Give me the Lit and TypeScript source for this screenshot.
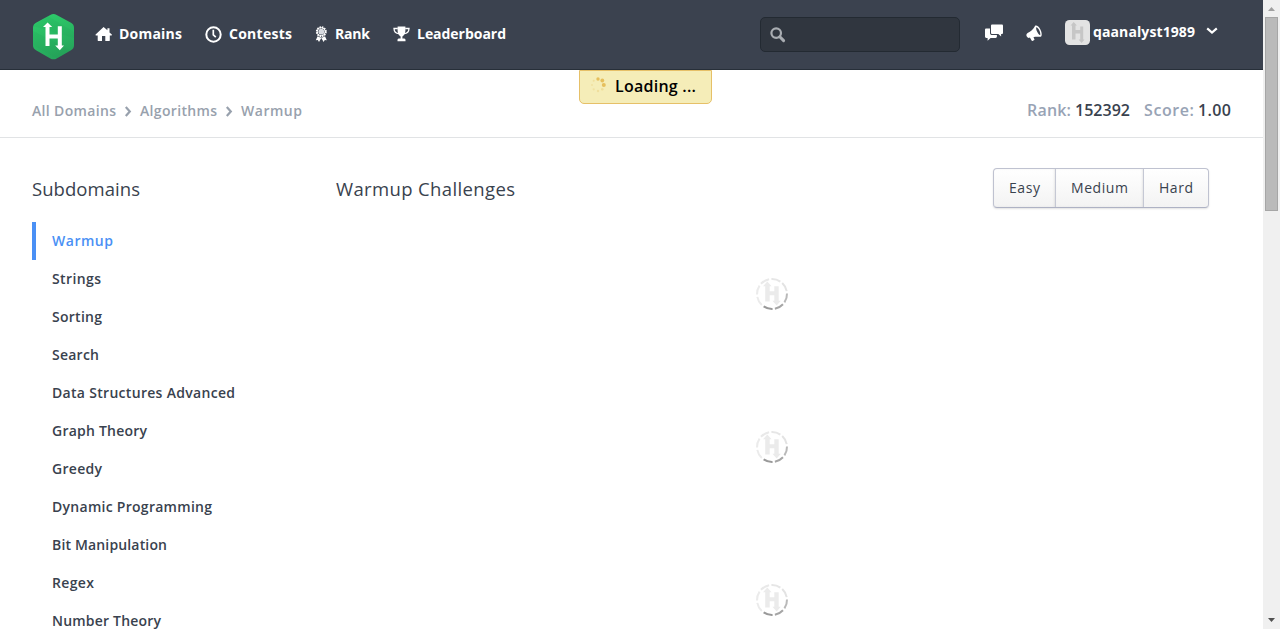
import { LitElement, html, css, svg } from "lit";
import { customElement, property } from "lit/decorators.js";

/** One line of text tracked so that it fills a given width. */
@customElement("fit-text")
class FitText extends LitElement {
  @property({ type: Number }) width = 0;
  @property() text = "";
  static styles = css`
    :host { display: inline-block; white-space: nowrap; flex: none; }
  `;
  render() {
    return html`<span>${this.text}</span>`;
  }
  updated() {
    const span = this.renderRoot.querySelector("span") as HTMLElement;
    span.style.letterSpacing = "0px";
    const natural = span.getBoundingClientRect().width;
    span.style.letterSpacing = `${(this.width - natural) / Math.max(1, this.text.length - 1)}px`;
    this.style.width = `${this.width}px`;
  }
}

const t = (text: string, width: number, cls = "") =>
  html`<fit-text class=${cls} .text=${text} .width=${width}></fit-text>`;

const icons = {
  home: html`<svg width="17" height="16" viewBox="0 0 17 16" fill="#fff"><path d="M8.6 1 .6 8.6c-.3.4-.1.8.4.8h1.700v5.200c0 .3.2.5.5.5H7v-5h3.300v5h4c.3 0 .5-.2.5-.5V9.400h1.600c.5 0 .7-.4.4-.8l-2.300-2.200V2.300h-2.100v2z"/></svg>`,
  clock: html`<svg width="17" height="17" viewBox="0 0 17 17" fill="none" stroke="#fff" stroke-width="2"><circle cx="8.500" cy="8.500" r="7.200"/><path d="M8.300 3.800v5l2.500 2.400" stroke-width="1.700"/></svg>`,
  ribbon: html`<svg width="13" height="17" viewBox="0 0 13 17"><circle cx="6.300" cy="5.700" r="4.500" fill="none" stroke="#fff" stroke-width="1.900" stroke-dasharray="1.500 .86"/><circle cx="6.300" cy="5.700" r="4" fill="none" stroke="#fff" stroke-width="1"/><circle cx="6.300" cy="5.700" r="2.900" fill="#d8dbe0"/><path fill="#fff" d="M2.600 10.300.8 14.300l2-.2 1.200 1.800 2.300-4 2.300 4 1.200-1.800 2 .2-1.800-4-2.500 1.200H5.100z"/></svg>`,
  trophy: html`<svg width="17" height="16" viewBox="0 0 17 16" fill="#fff"><path d="M4.600.4h7.800v4.200c0 3-1.300 5-3 5.900v1.900h1.400c.9 0 1.700.6 1.700 1.400v1.500H4.500v-1.500c0-.8.8-1.400 1.700-1.400h1.400v-1.900c-1.700-.9-3-2.900-3-5.900z"/><path fill="none" stroke="#fff" stroke-width="1.300" d="M4.800 2.500H1c.1 3 1.800 5 5 5.200M12.200 2.500H16c-.1 3-1.800 5-5 5.200"/></svg>`,
  search: html`<svg width="16" height="16" viewBox="0 0 16 16" fill="none" stroke="#a9adb2"><circle cx="6.200" cy="6.100" r="4.800" stroke-width="2.200"/><path d="m9.800 9.800 3.800 3.800" stroke-width="3" stroke-linecap="round"/></svg>`,
  chat: html`<svg width="18" height="17" viewBox="0 0 18 17" fill="#fff"><path d="M7.300.5h9.400c.8 0 1.300.5 1.300 1.300v6.900c0 .8-.5 1.300-1.300 1.300h-.6v2.600l-2.800-2.600h-6C6.500 10 6 9.500 6 8.700V1.800C6 1 6.500.5 7.300.5z"/><path d="M5 4.400H1.300C.5 4.400 0 4.900 0 5.700v6.900c0 .8.500 1.300 1.300 1.300h1.300v2.800l3-2.800h5c.8 0 1.300-.5 1.300-1.300V11H7.200C5.900 11 5 10.200 5 8.900z"/></svg>`,
  horn: html`<svg width="17" height="17" viewBox="0 0 17 17" fill="#fff"><path fill-rule="evenodd" d="M9.300.5c1.500-.5 3.800 1 5.100 3.900 1.500 3.100 1.900 6.500.3 7.400-1.900.1-4.500-.4-6.700.2l-.5.3.9 1.900c.2.400.1.700-.2.900l-1.700.8c-.4.2-.7 0-.9-.300L3.900 12.600c-1.200.6-2.400.2-3.100-1C0 10.300.4 8.800 1.600 8.100 4.800 6.500 7.100 4.700 9.300.5zm1 1.700c-.5 1.200.2 3.100.9 4.600.8 1.600 1.800 3.100 3 3.400.4-1.200-.1-3.200-1-5-.8-1.600-1.900-2.900-2.900-3z"/></svg>`,
  down: html`<svg width="12" height="8" viewBox="0 0 12 8" fill="none" stroke="#fff" stroke-width="2.200"><path d="m1.200 1.300 4.800 4.200 4.800-4.200"/></svg>`,
  crumb: html`<svg width="8" height="11" viewBox="0 0 8 11" fill="none" stroke="#98a1ad" stroke-width="2.200"><path d="m1.800 1 4 4.500L1.800 10"/></svg>`,
  logo: html`<svg width="42" height="46" viewBox="0 0 42 46">
    <defs><linearGradient id="g" x1="0" y1="0" x2=".35" y2="1"><stop offset="0" stop-color="#2ed06c"/><stop offset="1" stop-color="#26a65b"/></linearGradient></defs>
    <path fill="url(#g)" d="M17.300 1Q20.500-.8 23.700 1L38 8.800q3 1.700 3 5v17.500q0 3.300-3 5L23.700 44.400Q20.500 46.200 17.300 44.400L3 36.300Q0 34.600 0 31.300V13.800Q0 10.500 3 8.800z"/>
    <path fill="#1f9150" opacity=".12" d="M0 17 41 38l-3-1.700L23.700 44.400 0 31zM0 12 15 2.300 41 18v6z"/>
    <path fill="#fff" d="M14.600 8.500 19.200 13H16.500v7.400h8.300V12.300h4V31.500H31L26.800 36.200 22.200 31.500h2.600V24.400H16.500V32h-4V13H10z"/></svg>`,
  avatar: html`<svg width="25" height="25" viewBox="0 0 25 25"><rect width="25" height="25" rx="4.500" fill="#e3e3e3"/><path fill="#c6c6c6" d="m8.700 2 3.200 3.500H10.500v4.500h4.700V6.500h3V19.500h1.300l-2.900 3.600-3-3.600h1.600v-6H10.500V19.500H7V5.500H5.600z"/></svg>`,
  wait: html`<svg width="16" height="16" viewBox="0 0 16 16" fill="#e6bf5c"><circle cx="8" cy="2" r="1.700"/><circle cx="12.300" cy="3.500" r="1.900"/><circle cx="13.800" cy="8" r="2"/><circle cx="12.300" cy="12.200" r="1.300" opacity=".35"/><circle cx="8" cy="14" r="1.200" opacity=".3"/><circle cx="3.700" cy="12.300" r="1.100" opacity=".25"/><circle cx="2" cy="8" r="1" opacity=".25"/><circle cx="3.700" cy="3.700" r="1" opacity=".3"/></svg>`,
};

const arc = (i: number) => {
  const c = (a: number) => `${(17 + 15 * Math.cos(a)).toFixed(2)} ${(17 + 15 * Math.sin(a)).toFixed(2)}`;
  const s = ((i * 45 + 3) * Math.PI) / 180;
  return `M${c(s - 0.09)}A15 15 0 0 1 ${c(s + 0.54)}`;
};
const arcColors = ["#b9b9b9", "#a6a6a6", "#999", "#ebebeb", "#ebebeb", "#e9e9e9", "#e6e6e6", "#e3e3e3"];
const spinner = html`<svg class="spinner" width="34" height="34" viewBox="0 0 34 34">
  ${arcColors.map((c, i) => svg`<path d=${arc(i)} fill="none" stroke=${c} stroke-width="2"/>`)}
  <path fill="#ebebeb" d="m12.300 4.500 4.300 4.800H14.700v5h4.600V9.300h4.400V23.700h2.100L21.700 28.500l-4.300-4.800h1.900v-5.400h-4.600V24.500h-4.500V9.300H8z"/></svg>`;

const nav: [unknown, string, number][] = [
  [icons.home, "Domains", 63],
  [icons.clock, "Contests", 63],
  [icons.ribbon, "Rank", 35],
  [icons.trophy, "Leaderboard", 89],
];

const subdomains: [string, number][] = [
  ["Warmup", 61], ["Strings", 49], ["Sorting", 50], ["Search", 47],
  ["Data Structures Advanced", 183], ["Graph Theory", 95], ["Greedy", 50],
  ["Dynamic Programming", 160], ["Bit Manipulation", 115], ["Regex", 42], ["Number Theory", 109],
];

@customElement("app-root")
class AppRoot extends LitElement {
  static styles = css`
    :host {
      display: flex; width: 1280px; height: 629px; overflow: hidden; background: #fff;
      font-family: "Open Sans", "Noto Sans", sans-serif; font-size: 14px; line-height: 20px; color: #39424e;
    }
    * { box-sizing: border-box; }
    svg { display: block; flex: none; }
    .page { width: 1263px; height: 629px; overflow: hidden; position: relative; }
    header {
      height: 70px; background: #3b424f; border-bottom: 1px solid #272f39; color: #fff;
      display: flex; align-items: flex-start; padding-left: 33px; font-weight: 700;
    }
    .logo { margin-top: 14px; margin-right: 20px; }
    nav { display: flex; gap: 23px; padding-top: 24px; }
    nav a { display: flex; align-items: center; height: 20px; gap: 7px; }
    .search {
      margin-left: auto; margin-top: 17px; width: 200px; height: 35px; border: 1px solid #232a32;
      border-radius: 5px; background: #30363f; padding: 9px 0 0 9px;
    }
    .chat { margin: 24px 0 0 25px; }
    .horn { margin: 25px 0 0 23px; }
    .avatar { margin: 20px 0 0 22px; }
    .user { margin: 22px 0 0 3px; }
    .caret { margin: 27px 45px 0 11px; }
    .toast {
      position: absolute; left: 579px; top: 70px; width: 133px; height: 34px; border: 1px solid #e6c068;
      border-radius: 0 0 5px 5px; background: #f5edb8; color: #000; font-size: 16px; font-weight: 600;
      display: flex; align-items: center; padding: 0 0 2px 10px;
    }
    .toast fit-text { margin-left: 9px; }
    .toast svg { margin-top: -2px; }
    .bar {
      height: 68px; border-bottom: 1px solid #e1e3e5; padding: 31px 32px 0; display: flex;
      justify-content: space-between; align-items: flex-start; color: #98a1ad;
    }
    .crumbs { display: flex; align-items: center; font-weight: 600; gap: 8px; }
    .stats { display: flex; font-size: 16px; font-weight: 600; gap: 4px; color: #98a3b5; margin-top: -1px; }
    .stats .num { color: #39424e; }
    .stats .gap { margin-left: 10px; }
    main { display: flex; padding: 30px 54px 0 32px; }
    aside { width: 304px; }
    h2 { margin: 0; font-size: 18.5px; line-height: 24px; font-weight: 400; height: 54px; padding-top: 9px; }
    ul { margin: 0; padding: 0; list-style: none; font-weight: 600; }
    li { height: 38px; line-height: 38px; padding-left: 16px; border-left: 4px solid transparent; }
    li.on { color: #4a90f5; border-color: #4a90f5; }
    .content { flex: 1; }
    .head { display: flex; justify-content: space-between; }
    .levels {
      display: flex; width: 216px; height: 40px; border: 1px solid #bfc2d0; border-bottom-color: #aeb2c4; border-radius: 4px;
      background: linear-gradient(#fff, #f3f3f3); box-shadow: 0 1px 2px rgba(0, 0, 0, 0.12); overflow: hidden;
    }
    .levels span { display: flex; padding-left: 15px; align-items: center; border-left: 1px solid #c5c8d4; width: 88px; box-shadow: inset -1px 0 2px rgba(0, 0, 0, 0.08); }
    .levels span:first-child { border: 0; width: 61px; }
    .levels span:last-child { width: 65px; box-shadow: none; }
    .spins { display: flex; flex-direction: column; gap: 119px; align-items: center; padding: 55px 2px 0 0; }
    .scroll { width: 17px; height: 629px; background: #f0f0f0; display: flex; flex-direction: column; align-items: center; }
    .thumb { width: 13px; height: 194px; background: #bababa; border: 1px solid #a6a6a6; }
    .fill { flex: 1; }
  `;

  render() {
    return html`
      <div class="page">
        <header>
          <div class="logo">${icons.logo}</div>
          <nav>${nav.map(([i, s, w]) => html`<a>${i}${t(s, w)}</a>`)}</nav>
          <div class="search">${icons.search}</div>
          <div class="chat">${icons.chat}</div>
          <div class="horn">${icons.horn}</div>
          <div class="avatar">${icons.avatar}</div>
          ${t("qaanalyst1989", 102, "user")}
          <div class="caret">${icons.down}</div>
        </header>
        <div class="toast">${icons.wait}${t("Loading ...", 81)}</div>
        <div class="bar">
          <div class="crumbs">
            ${t("All Domains", 84)}${icons.crumb}${t("Algorithms", 77)}${icons.crumb}${t("Warmup", 61)}
          </div>
          <div class="stats">
            ${t("Rank:", 44)}${t("152392", 55, "num")}${t("Score:", 50, "gap")}${t("1.00", 33, "num")}
          </div>
        </div>
        <main>
          <aside>
            <h2>${t("Subdomains", 108)}</h2>
            <ul>${subdomains.map(([s, w], i) => html`<li class=${i ? "" : "on"}>${t(s, w)}</li>`)}</ul>
          </aside>
          <section class="content">
            <div class="head">
              <h2>${t("Warmup Challenges", 179)}</h2>
              <div class="levels">
                <span>${t("Easy", 31)}</span><span>${t("Medium", 57)}</span><span>${t("Hard", 34)}</span>
              </div>
            </div>
            <div class="spins">${spinner}${spinner}${spinner}</div>
          </section>
        </main>
      </div>
      <div class="scroll">
        <svg width="17" height="17"><path fill="#a0a0a0" d="M5 11h7L8.500 7z"/></svg>
        <div class="thumb"></div>
        <div class="fill"></div>
        <svg width="17" height="17"><path fill="#505050" d="M5 6h7l-3.500 4z"/></svg>
      </div>`;
  }
}
